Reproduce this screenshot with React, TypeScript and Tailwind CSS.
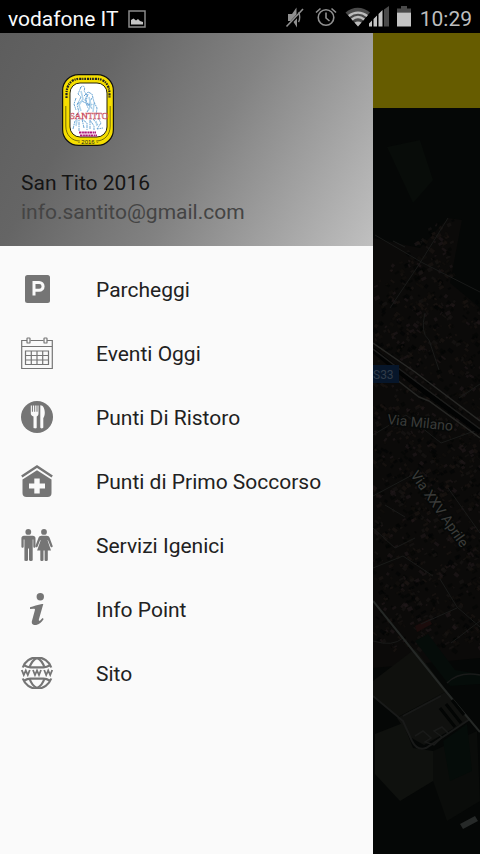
import type { ReactNode } from 'react'

interface IconProps {
    children: ReactNode
}

const Icon = ({ children }: IconProps) => (
    <svg className="size-8 shrink-0" viewBox="0 0 32 32" fill="#757575" aria-hidden="true">
        {children}
    </svg>
)

const ParkingIcon = () => (
    <Icon>
        <rect x="4" y="2" width="25" height="28" rx="2.5" />
        <path d="M13 22.5V9.5h5.2a3.9 3.9 0 0 1 0 7.8H13" fill="none" stroke="#fafafa" strokeWidth="3" />
    </Icon>
)

const CalendarIcon = () => (
    <Icon>
        <g fill="none" stroke="#757575" strokeWidth="1.2">
            <path d="M6 3.5H.7v28h30.6v-28H26M9.5 3.5h13M.7 9.5h30.6" />
            <rect x="6" y="1" width="3" height="5" rx=".6" />
            <rect x="23" y="1" width="3" height="5" rx=".6" />
            <path d="M4.500 14h23v13.500h-23zM4.500 18.500h23M4.500 23h23M10.300 14v13.500M16 14v13.500M21.700 14v13.500" />
        </g>
    </Icon>
)

const FoodIcon = () => (
    <Icon>
        <circle cx="16" cy="16" r="16" />
        <path d="M9.800 4.500h1.100v6.300h1V4.500h1.300v6.300h1V4.500h1.300v6.300h1V4.500h1v8c0 1.500-.8 2.500-1.800 3V26.500c0 1.200-3.200 1.200-3.200 0v-11c-1.700-.6-2.700-1.600-2.700-3z" fill="#fafafa" />
        <path d="M19.300 4.300c3 0 4.500 3.600 4.500 7.500 0 2.600-.8 4.400-1.500 5.300v9.500c0 1.100-3 1.100-3 0z" fill="#fafafa" />
    </Icon>
)

const FirstAidIcon = () => (
    <Icon>
        <path d="M.8 11.500 16 1.500l15.200 10" fill="none" stroke="#757575" strokeWidth="2.400" />
        <path d="M1.500 14.500 16 5.300l14.500 9.200V28c0 2.700-1.300 4-4 4h-21c-2.700 0-4-1.300-4-4z" />
        <path d="M13.300 13.500h5.400v5H24v5h-5.300v5h-5.400v-5H8v-5h5.300z" fill="#fafafa" />
    </Icon>
)

const ToiletIcon = () => (
    <Icon>
        <circle cx="7.300" cy="2.900" r="2.900" />
        <path d="M3 6.800h8.800c1.600 0 2.700 1.100 2.700 2.700v8c0 1.700-2.200 1.700-2.200 0v-7h-.6V31c0 1.400-3.700 1.400-3.700 0V19.500h-1V31c0 1.400-3.600 1.400-3.600 0V10.500h-.7v7c0 1.700-2.300 1.700-2.300 0v-8C.4 7.900 1.400 6.800 3 6.800z" />
        <circle cx="23" cy="2.900" r="2.900" />
        <path d="M20.500 6.800h5.200c1.600 0 2.500.8 3 2.300l2.900 7.600c.5 1.600-1.500 2.300-2.100.8L27 11.200h-.5l3.500 10.300h-3.200V31c0 1.400-3.200 1.400-3.200 0v-9.500h-1.100V31c0 1.400-3.200 1.400-3.200 0v-9.500h-3.200l3.600-10.300h-.6l-2.500 6.300c-.7 1.500-2.600.8-2.100-.8l2.900-7.600c.5-1.500 1.500-2.300 3.100-2.300z" />
    </Icon>
)

const InfoIcon = () => (
    <Icon>
        <circle cx="19.300" cy="3.700" r="3.700" />
        <path d="M9 14.300c3.500-1 7.500-2.400 12-3.300h1.300L18 26c-.5 1.800.2 2.300 1.200 1.500.8-.6 1.500-1.500 2.300-2.400l1.200.8c-2.200 3.500-5 6-8.300 6.200-2.900.1-4.200-1.500-3.400-4.300l2.800-10.300c.5-1.700-.2-2-1.400-1.800l-3.400.3z" />
    </Icon>
)

const WebIcon = () => (
    <Icon>
        <g fill="none" stroke="#757575" strokeWidth="2.200">
            <path d="M1.800 10.500a15 15 0 0 1 28.400 0M1.800 21.500a15 15 0 0 0 28.400 0" />
            <path d="M3 8.300c2 1.200 4 2 6.500 2h13c2.500 0 4.500-.8 6.500-2M3 23.700c2-1.200 4-2 6.500-2h13c2.500 0 4.500.8 6.500 2" />
            <path d="M8.500 10.500C10 6 12.500 2.500 16 1c3.500 1.500 6 5 7.500 9.500M8.500 21.500C10 26 12.500 29.500 16 31c3.500-1.500 6-5 7.500-9.500" />
        </g>
        <g fill="none" stroke="#757575" strokeWidth="1.800">
            <path d="m.8 13 2 5 2-4.500 2 4.500 2-5M12 13l2 5 2-4.500 2 4.500 2-5M23.200 13l2 5 2-4.500 2 4.500 2-5" />
        </g>
    </Icon>
)

const items = [
    { title: 'Parcheggi', icon: <ParkingIcon /> },
    { title: 'Eventi Oggi', icon: <CalendarIcon /> },
    { title: 'Punti Di Ristoro', icon: <FoodIcon /> },
    { title: 'Punti di Primo Soccorso', icon: <FirstAidIcon /> },
    { title: 'Servizi Igenici', icon: <ToiletIcon /> },
    { title: 'Info Point', icon: <InfoIcon /> },
    { title: 'Sito', icon: <WebIcon /> },
]

const StatusBar = () => (
    <div className="flex h-[33px] shrink-0 items-center bg-black px-2 pt-1 text-[21px] leading-7">
        <span className="text-gray-50">vodafone IT</span>
        <svg className="ml-2.5 size-[18px]" viewBox="0 0 18 18" aria-hidden="true">
            <rect x="1" y="1" width="16" height="16" fill="none" stroke="#8a8a8a" strokeWidth="1.500" />
            <path d="M3 14.500V10l2.500-1.500L8 10.500l2-1.500 2 2 3 1v2.500z" fill="#c4c4c4" />
        </svg>
        <div className="ml-auto flex items-center gap-2">
            <div className="flex items-center gap-1.5 pb-1">
                <svg className="h-[22px] w-[105px] text-[#8f8f8f]" viewBox="0 0 105 22" aria-hidden="true">
                    <g fill="none" stroke="currentColor" strokeWidth="1.600">
                        <path d="M1.500 20.500 18 3" />
                        <circle cx="41" cy="11.500" r="7.800" />
                        <path d="M41 6.500v5.500l3.500 3M31 6.500l4.500-4M51 6.500l-4.500-4" />
                    </g>
                    <path d="M3 8h4l4.500-6.500V8.500L5.500 15H3zM8.500 16l3.500-3.800V21.500z" fill="currentColor" />
                    <path d="M13.500 6.500c1.600 2 1.600 7 0 9.500" fill="none" stroke="currentColor" strokeWidth="1.400" />
                    <path d="M60.500 6.500c7-6.300 17.500-6.300 24.500 0L73 20.500z" fill="#4a4a4a" />
                    <g fill="none" stroke="#bdbdbd" strokeWidth="2.300">
                        <path d="M63.800 10c5.500-4.500 12.900-4.500 18.400 0M66.800 13.500c3.800-3 8.600-3 12.400 0" />
                    </g>
                    <path d="M69.500 16.500c2-1.500 5-1.500 7 0L73 20.500z" fill="#bdbdbd" />
                    <path d="M84 20.500v-3l3-3v6zM88.500 20.500V13l3.500-3.500v11zM93.500 20.500V8L97.500 4v16.500z" fill="#c4c4c4" />
                    <path d="M99 20.500V3.500L104 0v20.500z" fill="#4a4a4a" />
                </svg>
                <svg className="h-[22px] w-4" viewBox="0 0 16 22" aria-hidden="true">
                    <path d="M5 0h6v2.500h4v4H1v-4h4z" fill="#4a4a4a" />
                    <path d="M1 6.500h14v14H1z" fill="#c4c4c4" />
                </svg>
            </div>
            <span className="text-[#bdbdbd]">10:29</span>
        </div>
    </div>
)

const Logo = () => (
    <svg className="ml-[41px] h-[72px] w-[52px]" viewBox="0 0 52 72" role="img" aria-label="San Tito">
        <rect x=".6" y=".6" width="50.800" height="70.800" rx="16" fill="#f5de00" stroke="#111" strokeWidth="1.200" />
        <rect x="8" y="9" width="37" height="54" rx="10" fill="#fff" stroke="#26230c" strokeWidth="1" />
        <path d="M4.500 24v-4C4.500 10 10 4.800 18 4.800h16c8 0 13.500 5.200 13.500 15.200v4" fill="none" stroke="#222" strokeWidth="2.200" strokeDasharray="1.700 1 2.200 .8 1.200 .9" />
        <path d="M3.800 32v20c0 9 6 15 14 15M48.200 32v20c0 9-6 15-14 15" fill="none" stroke="#55500a" strokeWidth=".8" />
        <g fill="none" stroke="#5a9bcf" strokeWidth=".9">
            <path d="M18 14c3-4 6-1 4 3l3 4-2 5 3 8M19 13l-3 7 3 3-4 8 2 7-5 5M22 22l4-4 4 2 2 8 3 6-1 8M26 20l-2 7 4 6-3 5M15 30l5-3 7 4 6-1M14 24l-2 6 2 6M30 24l-3 5 3 6M11 55l2-8 4-3M17 57V46M22 54l-2-9 5 4v7M28 55v-9l4 6v4M36 44l3 5-4 6 6-1M31 45l5 6" strokeDasharray="3 .8 1.500 .6" />
        </g>
        <g fill="none" stroke="#b4d6ec" strokeWidth="1.600">
            <path d="M19 17l2 8-4 6 2 6M27 23l2 8-3 6M32 30l-1 8M15 46l-1 6M34 47l1 5" />
        </g>
        <text x="27" y="45" textAnchor="middle" fontFamily="Liberation Serif, serif" fontSize="9" fill="#fdf3d0" fillOpacity=".6" stroke="#c94a5e" strokeWidth=".5">SANTITO</text>
        <path d="M17 58.500h17M18 61.500h17" stroke="#b0187a" strokeWidth="2.200" strokeDasharray="2.500 .6 1.800 .4" />
        <text x="26" y="70" textAnchor="middle" fontFamily="Liberation Sans, sans-serif" fontSize="6" fill="#222">- 2016 -</text>
    </svg>
)

const noise = (n: number) => {
    const v = Math.sin(n * 12.9898) * 43758.5453
    return v - Math.floor(v)
}

const shades = ['#1c1512', '#181614', '#040605', '#120f0d', '#030404', '#20191a']

// roof tops and trees, scattered but always the same
const patches = Array.from({ length: 1500 }, (_, i) => ({
    x: noise(i + 1) * 107,
    y: 105 + noise(i + 2000) * 435,
    w: 1.5 + noise(i + 4000) * 4,
    h: 1.5 + noise(i + 6000) * 2.5,
    angle: noise(i + 8000) > 0.5 ? 38 : -28,
    color: shades[i % shades.length],
})).filter(p => p.y > 190 || (p.x < 80 && p.x + p.y > 175))

const SatelliteMap = () => (
    <svg className="min-h-0 w-full flex-1" viewBox="0 0 107 746" preserveAspectRatio="xMinYMin slice" fontFamily="Roboto, sans-serif" role="img" aria-label="Mappa">
        <rect width="107" height="746" fill="#050706" />
        <path d="M14 39l33-7 13 40-20 23z" fill="#080c09" />
        <path d="M0 130l47 10 28-30 14 2-12 63 30 25v350L0 560z" fill="#0b0a09" />
        {patches.map((p, i) => (
            <rect key={i} x={p.x} y={p.y} width={p.w} height={p.h} fill={p.color} opacity=".65" transform={`rotate(${p.angle} ${p.x} ${p.y})`} />
        ))}
        <path d="M0 573l42-32 32 42-49 26-25-20z" fill="#0f100d" />
        <path d="M42 533l13-7 27 36 25 4v10l-30 2z" fill="#050c09" />
        <path d="M42 518l14-7 3 5-15 8z" fill="#1b0c0c" />
        <path d="M2 626l28-11 10 25 20 3v30l-33 20-25-27z" fill="#0f110e" />
        <path d="M60 643l44-20 3 70-33 20-14-40z" fill="#0a0c0a" />
        <path d="M70 633l24-17 5 47-22 10z" fill="#050c09" />
        <path d="M24 610l50-27 23 28-46 26-14-8z" fill="#10110f" />
        <g fill="none" stroke="#191a19" strokeWidth="1">
            <path d="M17 200l30-45 28-45M2 127l48 28 57 29M20 133l12 6" />
            <path d="M52 205q-5 20 4 27l10 30M86 290l21-14" />
            <path d="M0 327l33-20 35 28 39-14M0 388l45-24M12 397l20 12M75 380l32 45M0 420l22 20 20-10M0 460l30-12 30 20" />
            <path d="M67 471l17 28 23 20M48 516l36-16M78 535l29-22M0 533q20 6 30-3" />
            <path d="M74 575q12-12 33-8" strokeWidth="1.500" />
            <path d="M0 588l30 25 9 20q5 10 14 7l44-29" strokeWidth="2" />
            <path d="M42 628l8-5 8 7-6 4 9 3 8-8-8-6 8-4 6 6M30 608l38-20" strokeWidth="1.500" />
        </g>
        <g fill="none">
            <path d="M0 242l52 42 55 40" stroke="#020303" strokeWidth="5" />
            <path d="M0 235l42 29 65 49" stroke="#282826" strokeWidth="1.500" />
            <path d="M0 241l45 34 62 46" stroke="#1d1d1c" strokeWidth="1.500" />
            <path d="M24 272l22 17 10 4 51 37" stroke="#262624" strokeWidth="1.500" />
            <path d="M0 493l70 87 37 44" stroke="#252826" strokeWidth="2" />
            <path d="M67 600l15 19M73 596l15 19M79 592l12 15" stroke="#030504" strokeWidth="3" />
        </g>
        <path d="M87 716l15-8 3 5-15 8z" fill="#262928" />
        <rect x="-8" y="257" width="34" height="18" fill="#07162a" />
        <text x="0" y="271" fontSize="12" fill="#313c49">S33</text>
        <g fontSize="14" fill="#3a3b39" stroke="#060807" strokeWidth="3" paintOrder="stroke">
            <text x="14" y="316" transform="rotate(6 14 316)">Via Milano</text>
            <text x="37" y="367" transform="rotate(55 37 367)">Via XXV Aprile</text>
        </g>
    </svg>
)

const Drawer = () => (
    <aside className="flex w-[373px] shrink-0 flex-col bg-[#fafafa]">
        <header className="flex flex-col bg-[linear-gradient(120deg,#5d5d5d,#656565_25%,#828282_55%,#c0c0c0)] px-[21px] pt-[41px] pb-[19px]">
            <Logo />
            <span className="mt-[23px] text-[21px] leading-7 text-[#151515]">San Tito 2016</span>
            <span className="text-[21px] leading-[30px] text-[#444]">info.santito@gmail.com</span>
        </header>
        <nav className="flex flex-col pt-[11px]">
            {items.map(item => (
                <a key={item.title} href="#" className="flex h-16 items-center gap-[43px] px-[21px] text-[21px] text-[#212121]">
                    {item.icon}
                    <span className="pt-1">{item.title}</span>
                </a>
            ))}
        </nav>
    </aside>
)

const App = () => {
    return (
        <div className="flex h-screen flex-col overflow-hidden bg-black font-[Roboto,sans-serif]">
            <StatusBar />
            <div className="flex min-h-0 flex-1">
                <Drawer />
                <main className="flex min-w-0 flex-1 flex-col">
                    <div className="h-[75px] shrink-0 bg-[#665c00]" />
                    <SatelliteMap />
                </main>
            </div>
        </div>
    )
}

export default App
